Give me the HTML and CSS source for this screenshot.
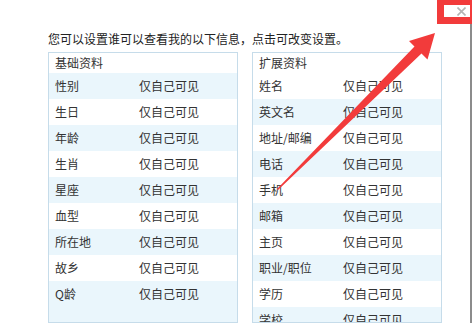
FILE: index.html
```html
<!DOCTYPE html>
<html lang="zh-CN">
<head>
<meta charset="utf-8">
<link rel="stylesheet" href="styles.css">
</head>
<body>
<div class="dialog">
  <div class="intro">您可以设置谁可以查看我的以下信息，点击可改变设置。</div>
  <div class="panels">
    <div class="panel panel-left">
      <div class="panel-head">基础资料</div>
      <div class="row"><span class="label">性别</span><span class="value">仅自己可见</span></div>
      <div class="row"><span class="label">生日</span><span class="value">仅自己可见</span></div>
      <div class="row"><span class="label">年龄</span><span class="value">仅自己可见</span></div>
      <div class="row"><span class="label">生肖</span><span class="value">仅自己可见</span></div>
      <div class="row"><span class="label">星座</span><span class="value">仅自己可见</span></div>
      <div class="row"><span class="label">血型</span><span class="value">仅自己可见</span></div>
      <div class="row"><span class="label">所在地</span><span class="value">仅自己可见</span></div>
      <div class="row"><span class="label">故乡</span><span class="value">仅自己可见</span></div>
      <div class="row"><span class="label">Q龄</span><span class="value">仅自己可见</span></div>
      <div class="filler"></div>
    </div>
    <div class="panel panel-right">
      <div class="panel-head">扩展资料</div>
      <div class="row"><span class="label">姓名</span><span class="value">仅自己可见</span></div>
      <div class="row"><span class="label">英文名</span><span class="value">仅自己可见</span></div>
      <div class="row"><span class="label">地址/邮编</span><span class="value">仅自己可见</span></div>
      <div class="row"><span class="label">电话</span><span class="value">仅自己可见</span></div>
      <div class="row"><span class="label">手机</span><span class="value">仅自己可见</span></div>
      <div class="row"><span class="label">邮箱</span><span class="value">仅自己可见</span></div>
      <div class="row"><span class="label">主页</span><span class="value">仅自己可见</span></div>
      <div class="row"><span class="label">职业/职位</span><span class="value">仅自己可见</span></div>
      <div class="row"><span class="label">学历</span><span class="value">仅自己可见</span></div>
      <div class="row"><span class="label">学校</span><span class="value">仅自己可见</span></div>
    </div>
  </div>
</div>
<div class="edge"></div>
<div class="close-box">
  <svg class="close" width="9" height="9" viewBox="0 0 9 9">
    <path d="M0.5 0.5 L8.5 8.5 M8.5 0.5 L0.5 8.5" stroke="#b4b4b4" stroke-width="1.6" fill="none"/>
  </svg>
</div>
<svg class="arrow" width="472" height="323" viewBox="0 0 472 323">
  <polygon fill="#f23b3b" points="278,190 421.5,53.5 427.5,59.5 435,33 409,41 414.5,46.5 277,189"/>
</svg>
</body>
</html>
```

FILE: styles.css
```css
html, body {
  margin: 0;
  padding: 0;
  background: #ffffff;
  overflow: hidden;
  height: 323px;
}
body {
  font-family: "Noto Sans CJK SC", "Noto Sans", sans-serif;
  font-size: 12px;
  color: #333333;
  position: relative;
}
.dialog {
  padding: 31px 0 0 48px;
}
.intro {
  line-height: 16px;
  height: 21px;
  color: #222222;
}
.panels {
  display: flex;
  gap: 14px;
}
.panel {
  width: 190px;
  box-sizing: border-box;
  border: 1px solid #c6dcea;
  background: #ffffff;
  height: 271px;
  display: flex;
  flex-direction: column;
  overflow: hidden;
}
.panel-head {
  height: 20px;
  line-height: 20px;
  padding-left: 6px;
  color: #333333;
  flex: none;
}
.row {
  height: 26px;
  line-height: 26px;
  display: flex;
  padding-left: 6px;
  flex: none;
}
.panel-right .row:last-child {
  height: 16px;
  line-height: 26px;
  overflow: hidden;
}
.label {
  width: 84px;
  flex: none;
}
.value {
  color: #333333;
}
.panel-left .row:nth-child(even) {
  background: #eaf6fc;
}
.panel-right .row:nth-child(odd) {
  background: #eaf6fc;
}
.filler {
  flex: 1;
  background: #eaf6fc;
}
.edge {
  position: absolute;
  left: 470px;
  top: 24px;
  width: 2px;
  height: 299px;
  background: #8c8c8c;
}
.close-box {
  position: absolute;
  left: 437px;
  top: 0;
  width: 35px;
  height: 24px;
  box-sizing: border-box;
  border-style: solid;
  border-color: #f23b3b;
  border-width: 5px 2px 7px 7px;
  background: #ffffff;
  display: flex;
  justify-content: flex-end;
  align-items: center;
}
.close {
  display: block;
  margin-right: 4px;
}
.arrow {
  position: absolute;
  left: 0;
  top: 0;
}
```
